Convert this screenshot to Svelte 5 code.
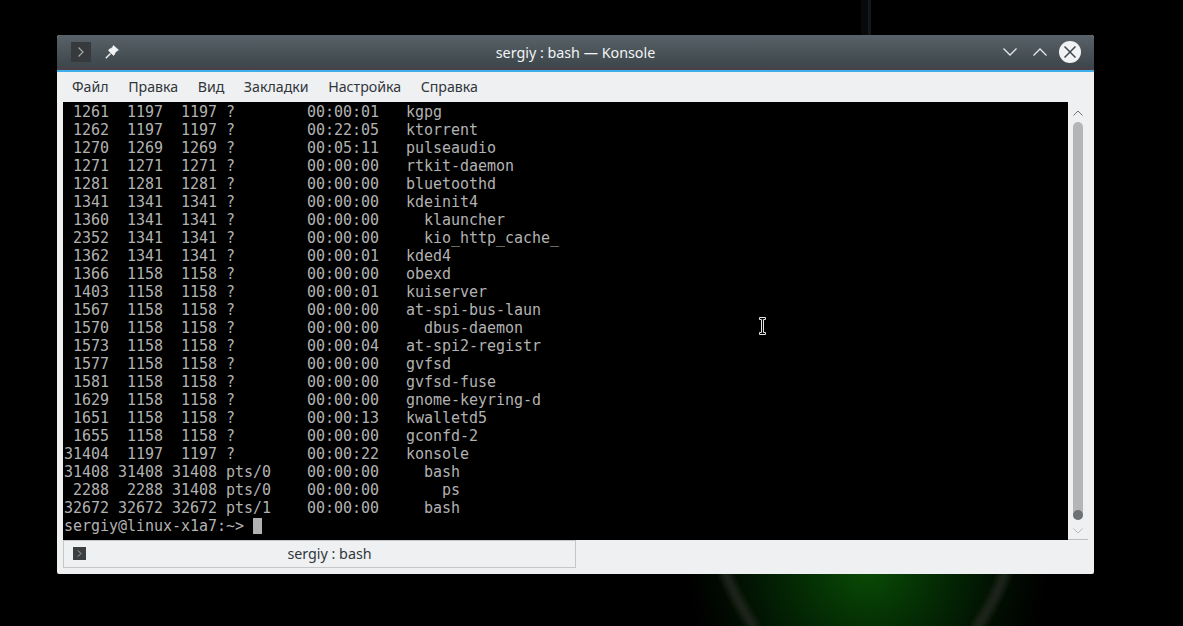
<script>
	const menu = ['Файл', 'Правка', 'Вид', 'Закладки', 'Настройка', 'Справка'];

	const rows = [
		[' 1261', ' 1197', ' 1197', '?', '00:00:01', 'kgpg'],
		[' 1262', ' 1197', ' 1197', '?', '00:22:05', 'ktorrent'],
		[' 1270', ' 1269', ' 1269', '?', '00:05:11', 'pulseaudio'],
		[' 1271', ' 1271', ' 1271', '?', '00:00:00', 'rtkit-daemon'],
		[' 1281', ' 1281', ' 1281', '?', '00:00:00', 'bluetoothd'],
		[' 1341', ' 1341', ' 1341', '?', '00:00:00', 'kdeinit4'],
		[' 1360', ' 1341', ' 1341', '?', '00:00:00', '  klauncher'],
		[' 2352', ' 1341', ' 1341', '?', '00:00:00', '  kio_http_cache_'],
		[' 1362', ' 1341', ' 1341', '?', '00:00:01', 'kded4'],
		[' 1366', ' 1158', ' 1158', '?', '00:00:00', 'obexd'],
		[' 1403', ' 1158', ' 1158', '?', '00:00:01', 'kuiserver'],
		[' 1567', ' 1158', ' 1158', '?', '00:00:00', 'at-spi-bus-laun'],
		[' 1570', ' 1158', ' 1158', '?', '00:00:00', '  dbus-daemon'],
		[' 1573', ' 1158', ' 1158', '?', '00:00:04', 'at-spi2-registr'],
		[' 1577', ' 1158', ' 1158', '?', '00:00:00', 'gvfsd'],
		[' 1581', ' 1158', ' 1158', '?', '00:00:00', 'gvfsd-fuse'],
		[' 1629', ' 1158', ' 1158', '?', '00:00:00', 'gnome-keyring-d'],
		[' 1651', ' 1158', ' 1158', '?', '00:00:13', 'kwalletd5'],
		[' 1655', ' 1158', ' 1158', '?', '00:00:00', 'gconfd-2'],
		['31404', ' 1197', ' 1197', '?', '00:00:22', 'konsole'],
		['31408', '31408', '31408', 'pts/0', '00:00:00', '  bash'],
		[' 2288', ' 2288', '31408', 'pts/0', '00:00:00', '    ps'],
		['32672', '32672', '32672', 'pts/1', '00:00:00', '  bash']
	];

	const lines = rows.map(
		([pid, ppid, pgid, tty, time, cmd]) =>
			`${pid} ${ppid} ${pgid} ${tty.padEnd(8)} ${time}   ${cmd}`
	);
</script>

<div class="desktop">
	<svg class="wallpaper" width="1183" height="626" viewBox="0 0 1183 626" aria-hidden="true">
		<defs>
			<radialGradient id="glow" cx="868" cy="565" r="180" gradientUnits="userSpaceOnUse">
				<stop offset="0" stop-color="#0a4d05" />
				<stop offset="0.3" stop-color="#053304" />
				<stop offset="0.6" stop-color="#021a03" />
				<stop offset="0.85" stop-color="#010801" />
				<stop offset="1" stop-color="#000" />
			</radialGradient>
			<filter id="soft"><feGaussianBlur stdDeviation="3" /></filter>
		</defs>
		<rect x="670" y="560" width="380" height="66" fill="url(#glow)" />
		<g filter="url(#soft)" fill="none" stroke="#23281e" stroke-width="9">
			<path d="M724 570 Q736 600 756 630" />
			<path d="M1006 570 Q996 600 975 630" />
		</g>
		<rect x="868" y="0" width="3" height="35" fill="#14181b" />
		<rect x="861" y="0" width="7" height="35" fill="#07090a" />
	</svg>

	<div class="window">
		<header class="titlebar">
			<div class="title-left">
				<span class="app-icon">
					<svg width="8" height="12" viewBox="0 0 8 12"><path d="M1.500 1.500 6 6l-4.500 4.500" fill="none" stroke="#a4a8aa" stroke-width="1.200" /></svg>
				</span>
				<svg width="14" height="14" viewBox="0 0 14 14">
					<path d="M8.500.5 13.500 5 10.500 7 9.500 9.500 8.500 10.500 3.500 5.500 4.500 4 7 3z" fill="#f2f3f3" stroke="#f2f3f3" stroke-width=".6" />
					<path d="M5.500 8.500 .8 13.200" fill="none" stroke="#f2f3f3" stroke-width="1.400" />
				</svg>
			</div>
			<span class="title">sergiy : bash — Konsole</span>
			<div class="title-right">
				<svg width="14" height="8" viewBox="0 0 14 8"><path d="M.5.5 7 7l6.500-6.500" fill="none" stroke="#e6e9ea" stroke-width="1.300" /></svg>
				<svg width="14" height="8" viewBox="0 0 14 8"><path d="M.5 7.500 7 1l6.500 6.500" fill="none" stroke="#e6e9ea" stroke-width="1.300" /></svg>
				<span class="close">
					<svg width="12" height="12" viewBox="0 0 12 12"><path d="M.5.5l11 11M11.500.5l-11 11" fill="none" stroke="#3f474c" stroke-width="1.500" /></svg>
				</span>
			</div>
		</header>

		<nav class="menubar">
			{#each menu as item}
				<span>{item}</span>
			{/each}
		</nav>

		<div class="body">
			<div class="terminal">
				{#each lines as line}
					<div class="line">{line}</div>
				{/each}
				<div class="line">sergiy@linux-x1a7:~&gt; <span class="caret"> </span></div>
			</div>
			<div class="scrollbar">
				<svg width="10" height="6" viewBox="0 0 10 6"><path d="M.5 5.500 5 1l4.500 4.500" fill="none" stroke="#6d7175" stroke-width="1" /></svg>
				<div class="track"><div class="thumb"></div></div>
				<svg width="10" height="6" viewBox="0 0 10 6"><path d="M.5.500 5 5 9.500.5" fill="none" stroke="#b9bcbe" stroke-width="1" /></svg>
			</div>
		</div>

		<footer class="tabs">
			<div class="tab">
				<span class="tab-icon">
					<svg width="5" height="7" viewBox="0 0 5 7"><path d="M1 .5 4 3.500 1 6.500" fill="none" stroke="#a8acae" stroke-width="1" /></svg>
				</span>
				<span class="tab-label">sergiy : bash</span>
			</div>
		</footer>
	</div>

	<svg class="ibeam" width="9" height="20" viewBox="0 0 9 20" aria-hidden="true">
		<path d="M1.500 1.500h6v2h-2v13h2v2h-6v-2h2v-13h-2z" fill="#000" stroke="#e4e4e4" stroke-width="1" />
	</svg>
</div>

<style>
	:global(body) {
		background: #000;
	}

	.desktop {
		position: relative;
		width: 1183px;
		height: 626px;
		padding: 35px 0 0 57px;
		box-sizing: border-box;
		overflow: hidden;
		background: #000;
	}

	.wallpaper {
		position: absolute;
		inset: 0;
	}

	.window {
		position: relative;
		display: flex;
		flex-direction: column;
		width: 1037px;
		height: 539px;
		border-radius: 3px 3px 2px 2px;
		background: #eff0f1;
		font-family: 'Noto Sans', sans-serif;
		overflow: hidden;
	}

	.titlebar {
		position: relative;
		display: flex;
		flex: none;
		align-items: center;
		justify-content: space-between;
		height: 37px;
		padding: 0 13px 1px 14px;
		box-sizing: border-box;
		background: linear-gradient(#596268, #3e474c 88%, #4c3f47);
		border-bottom: 2px solid #3daee9;
	}

	.title-left,
	.title-right {
		display: flex;
		align-items: center;
	}

	.title-left {
		gap: 14px;
	}

	.title-right {
		gap: 16px;
	}

	.app-icon {
		display: flex;
		align-items: center;
		justify-content: center;
		width: 20px;
		height: 20px;
		background: #363a3c;
	}

	.title {
		position: absolute;
		left: 0;
		right: 0;
		text-align: center;
		font-size: 14.300px;
		color: #f2f4f5;
	}

	.close {
		display: flex;
		align-items: center;
		justify-content: center;
		width: 22px;
		height: 22px;
		margin-left: -4px;
		border-radius: 50%;
		background: #f1f2f3;
	}

	.menubar {
		display: flex;
		flex: none;
		align-items: center;
		gap: 19.500px;
		height: 30px;
		padding: 0 15px 2px;
		box-sizing: border-box;
		font-size: 14.200px;
		color: #31363b;
	}

	.body {
		display: flex;
		flex: none;
		height: 438px;
		padding: 0 6px;
	}

	.terminal {
		flex: 1;
		padding-top: 1px;
		padding-left: 1px;
		background: #000;
		color: #b2b2b2;
		font-family: 'DejaVu Sans Mono', monospace;
		font-size: 15px;
		line-height: 18px;
		letter-spacing: -0.03px;
	}

	.line {
		height: 18px;
		white-space: pre;
	}

	.caret {
		display: inline-block;
		width: 9px;
		height: 16px;
		vertical-align: -3px;
		background: #b2b2b2;
	}

	.scrollbar {
		display: flex;
		flex-direction: column;
		align-items: center;
		width: 20px;
		padding: 8px 0 5px;
		box-sizing: border-box;
		border-bottom: 1px solid #bcbec0;
	}

	.track {
		flex: 1;
		width: 10px;
		margin: 6px 0 8px;
	}

	.thumb {
		position: relative;
		height: 100%;
		border-radius: 5px;
		background: #b3b5b7;
	}

	.thumb::after {
		content: '';
		position: absolute;
		left: 0;
		bottom: 0;
		width: 10px;
		height: 10px;
		border-radius: 50%;
		background: #6f7274;
	}

	.tabs {
		display: flex;
		flex: 1;
		padding: 0 6px;
	}

	.tab {
		position: relative;
		display: flex;
		align-items: center;
		justify-content: center;
		width: 513px;
		height: 28px;
		padding-bottom: 2px;
		border: 1px solid #c4c6c8;
		box-sizing: border-box;
	}

	.tab-icon {
		position: absolute;
		top: 6px;
		left: 9px;
		display: flex;
		align-items: center;
		justify-content: center;
		width: 13px;
		height: 13px;
		background: #3c3f41;
	}

	.tab-label {
		margin-left: 20px;
		font-size: 14.300px;
		color: #31363b;
	}

	.ibeam {
		position: absolute;
		left: 758px;
		top: 316px;
	}
</style>
